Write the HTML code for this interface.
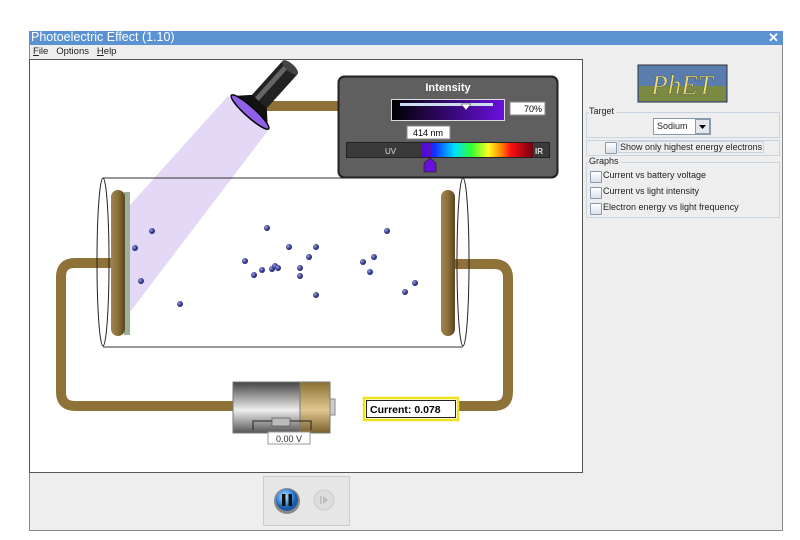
<!DOCTYPE html>
<html><head><meta charset="utf-8"><style>
body{margin:0;width:800px;height:540px;background:#fff;position:relative;overflow:hidden;font-family:"Liberation Sans",sans-serif}
.a{position:absolute}
.cb{position:absolute;width:10px;height:10px;border:1px solid #8a9aae;background:linear-gradient(#fff,#d8e0ea);border-radius:1px}
.t{position:absolute;font-size:9px;color:#222;white-space:nowrap}
</style></head><body>
<div class="a" style="left:29px;top:31px;width:754px;height:14px;background:#5b93d2"></div>
<div class="t" style="left:31px;top:30px;font-size:12.5px;color:#fff">Photoelectric Effect (1.10)</div>
<div class="t" style="left:768px;top:30px;font-size:13px;color:#fff;font-weight:bold">✕</div>
<div class="a" style="left:29px;top:45px;width:754px;height:486px;background:#eeeeee;border:1px solid #888;border-top:none;box-sizing:border-box"></div>
<div class="t" style="left:33px;top:46px;font-size:9.5px"><u>F</u>ile&nbsp;&nbsp; Options&nbsp;&nbsp; <u>H</u>elp</div>
<div class="a" style="left:29px;top:59px;width:554px;height:414px;background:#fff;border:1px solid #555;box-sizing:border-box"></div>
<svg class="a" style="left:0;top:0" width="800" height="540">
<defs>
<linearGradient id="wv" x1="0" x2="1"><stop offset="0" stop-color="#a08550"/><stop offset=".5" stop-color="#8c6f38"/><stop offset="1" stop-color="#5a4520"/></linearGradient>
<linearGradient id="bat" x1="0" y1="0" x2="0" y2="1"><stop offset="0" stop-color="#444"/><stop offset=".55" stop-color="#eee"/><stop offset="1" stop-color="#555"/></linearGradient>
<linearGradient id="bat2" x1="0" y1="0" x2="0" y2="1"><stop offset="0" stop-color="#8c7034"/><stop offset=".55" stop-color="#e0c890"/><stop offset="1" stop-color="#7a5f2a"/></linearGradient>
<linearGradient id="spec" x1="0" x2="1"><stop offset="0" stop-color="#6600cc"/><stop offset=".12" stop-color="#1030ff"/><stop offset=".3" stop-color="#00e0ff"/><stop offset=".45" stop-color="#30ff30"/><stop offset=".6" stop-color="#ffff20"/><stop offset=".72" stop-color="#ff8000"/><stop offset=".8" stop-color="#ff1010"/><stop offset="1" stop-color="#700010"/></linearGradient>
<linearGradient id="sl" x1="0" x2="1"><stop offset="0" stop-color="#000"/><stop offset="1" stop-color="#6a10e0"/></linearGradient>
<radialGradient id="el" cx=".35" cy=".35"><stop offset="0" stop-color="#9aa0e0"/><stop offset="1" stop-color="#2a2e80"/></radialGradient>
<radialGradient id="pb" cx=".4" cy=".35"><stop offset="0" stop-color="#bfe4ff"/><stop offset=".7" stop-color="#3e8ee0"/><stop offset="1" stop-color="#1d5aa8"/></radialGradient>
</defs>
<!-- beam -->
<polygon points="228,96 270,128 130,312 130,205" fill="#e3d8f5"/>
<!-- wires -->
<g fill="none" stroke="#8e7238" stroke-width="10" stroke-linejoin="round">
<path d="M111,263 H75 Q61,263 61,277 V392 Q61,406 75,406 H240"/>
<path d="M455,264 H494 Q508,264 508,278 V392 Q508,406 494,406 H455"/>
<path d="M258,106 H345"/>
</g>
<!-- tube -->
<line x1="103" y1="178" x2="463" y2="178" stroke="#333"/>
<line x1="103" y1="347" x2="463" y2="347" stroke="#333"/>
<ellipse cx="103" cy="262" rx="6" ry="84" fill="none" stroke="#222"/>
<!-- plates -->
<rect x="124" y="192" width="6" height="143" fill="#9cb09a"/>
<rect x="111" y="190" width="14" height="146" rx="7" fill="url(#wv)"/>
<rect x="441" y="190" width="14" height="146" rx="7" fill="url(#wv)"/>
<ellipse cx="463" cy="262" rx="6" ry="84" fill="none" stroke="#222"/>
<!-- electrons -->
<g fill="url(#el)">
<circle cx="152" cy="231" r="3"/><circle cx="135" cy="248" r="3"/><circle cx="141" cy="281" r="3"/><circle cx="180" cy="304" r="3"/>
<circle cx="267" cy="228" r="3"/><circle cx="245" cy="261" r="3"/><circle cx="254" cy="275" r="3"/><circle cx="262" cy="270" r="3"/><circle cx="272" cy="269" r="3"/><circle cx="275" cy="266" r="3"/><circle cx="278" cy="268" r="3"/><circle cx="289" cy="247" r="3"/><circle cx="300" cy="268" r="3"/><circle cx="300" cy="276" r="3"/><circle cx="309" cy="257" r="3"/><circle cx="316" cy="247" r="3"/><circle cx="316" cy="295" r="3"/>
<circle cx="363" cy="262" r="3"/><circle cx="374" cy="257" r="3"/><circle cx="370" cy="272" r="3"/><circle cx="387" cy="231" r="3"/><circle cx="405" cy="292" r="3"/><circle cx="415" cy="283" r="3"/>
</g>
<!-- lamp -->
<g transform="translate(250,112) rotate(-48)">
<rect x="10" y="-10" width="50" height="20" fill="#222"/>
<rect x="10" y="-6" width="50" height="5" fill="#666"/>
<ellipse cx="60" cy="0" rx="4" ry="10" fill="#444"/>
<path d="M0,-24 L14,-10 L14,10 L0,24 Z" fill="#111"/>
<ellipse cx="0" cy="0" rx="5" ry="25" fill="#9060e8" stroke="#000" stroke-width="1.5"/>
</g>
<!-- intensity panel -->
<rect x="338.5" y="76.5" width="219" height="101" rx="6" fill="#5f5f5f" stroke="#222" stroke-width="2"/>
<text x="448" y="91" font-size="11" fill="#fff" font-weight="bold" text-anchor="middle" font-family="Liberation Sans">Intensity</text>
<rect x="391.5" y="99.5" width="113" height="21" fill="url(#sl)" stroke="#ddd"/>
<rect x="400" y="103" width="93" height="3" fill="#cde"/>
<path d="M461,104 h10 l-5,6 z" fill="#fff" stroke="#333" stroke-width=".5"/>
<rect x="510" y="102" width="35" height="13" fill="#fff" stroke="#888"/>
<text x="542" y="112" font-size="9" text-anchor="end" font-family="Liberation Sans">70%</text>
<rect x="407" y="126" width="43" height="13" fill="#fff" stroke="#888"/>
<text x="428" y="136" font-size="9" text-anchor="middle" font-family="Liberation Sans">414 nm</text>
<rect x="346.5" y="142.5" width="203" height="15" fill="#3a3a3a" stroke="#222"/>
<rect x="421" y="143" width="112" height="14" fill="url(#spec)"/>
<text x="385" y="154" font-size="8" fill="#ddd" font-family="Liberation Sans">UV</text>
<text x="535" y="154" font-size="8" fill="#ddd" font-weight="bold" font-family="Liberation Sans">IR</text>
<rect x="427" y="143" width="5" height="14" fill="#5a10c0"/>
<path d="M424,163 l6,-5 l6,5 v9 h-12 z" fill="#6a10d8" stroke="#222" stroke-width=".7"/>
<!-- battery -->
<rect x="233" y="382" width="67" height="51" fill="url(#bat)" stroke="#777"/>
<rect x="300" y="382" width="30" height="51" fill="url(#bat2)" stroke="#777"/>
<rect x="330" y="399" width="5" height="16" fill="#ccc" stroke="#888"/>
<path d="M253,430 V421 H311 V430" fill="none" stroke="#222"/>
<rect x="272" y="418" width="18" height="8" fill="#bbb" stroke="#444" stroke-width=".6"/>
<rect x="268" y="432" width="42" height="12" fill="#fff" stroke="#999"/>
<text x="289" y="442" font-size="9" text-anchor="middle" fill="#333" font-family="Liberation Sans">0.00 V</text>
<!-- current -->
<rect x="364" y="398" width="94" height="22" fill="#fff" stroke="#f0e020" stroke-width="2.5"/>
<rect x="366.5" y="400.5" width="89" height="17" fill="none" stroke="#222"/>
<text x="370" y="413" font-size="10.5" font-weight="bold" font-family="Liberation Sans">Current:  0.078</text>
<!-- controls -->
<rect x="263.5" y="476.5" width="86" height="49" fill="#e6e6e6" stroke="#ccc"/>
<circle cx="287" cy="501" r="13" fill="#888"/>
<circle cx="287" cy="500" r="11" fill="url(#pb)"/>
<rect x="282" y="494" width="3.5" height="12" fill="#111"/><rect x="288.5" y="494" width="3.5" height="12" fill="#111"/>
<circle cx="324" cy="500" r="10" fill="#ddd" stroke="#ccc"/>
<rect x="320" y="496" width="1.5" height="8" fill="#bbb"/><path d="M323,496 l5,4 l-5,4z" fill="#bbb"/>
<!-- phet logo -->
<rect x="638" y="65" width="89" height="37" fill="#5a7db0" stroke="#333"/>
<rect x="639" y="86" width="87" height="15" fill="#7a8a40"/>
<text x="682" y="94" font-size="27" font-style="italic" fill="#e8e070" text-anchor="middle" font-family="Liberation Serif" stroke="#555" stroke-width=".5">PhET</text>
<!-- groups -->
<rect x="586.5" y="112.5" width="193" height="25" fill="none" stroke="#c8d4e0"/>
<rect x="586.5" y="140.5" width="193" height="15" fill="none" stroke="#c8d4e0"/>
<rect x="586.5" y="162.5" width="193" height="55" fill="none" stroke="#c8d4e0"/>
<rect x="653.5" y="118.5" width="57" height="16" fill="#fff" stroke="#8a9aae"/>
<rect x="695.5" y="119.5" width="14" height="14" fill="#e4e8ee" stroke="#8a9aae"/>
<path d="M699,125 h7 l-3.5,4z" fill="#000"/>
</svg>
<div class="t" style="left:589px;top:106px;background:#eee;padding-right:2px">Target</div>
<div class="t" style="left:657px;top:121px">Sodium</div>
<div class="cb" style="left:605px;top:142px"></div>
<div class="t" style="left:618px;top:141px;border:1px solid #c8d4e0;padding:0 1px">Show only highest energy electrons</div>
<div class="t" style="left:589px;top:156px;background:#eee;padding-right:2px">Graphs</div>
<div class="cb" style="left:590px;top:171px"></div><div class="t" style="left:603px;top:170px">Current vs battery voltage</div>
<div class="cb" style="left:590px;top:187px"></div><div class="t" style="left:603px;top:186px">Current vs light intensity</div>
<div class="cb" style="left:590px;top:203px"></div><div class="t" style="left:603px;top:202px">Electron energy vs light frequency</div>
</body></html>
